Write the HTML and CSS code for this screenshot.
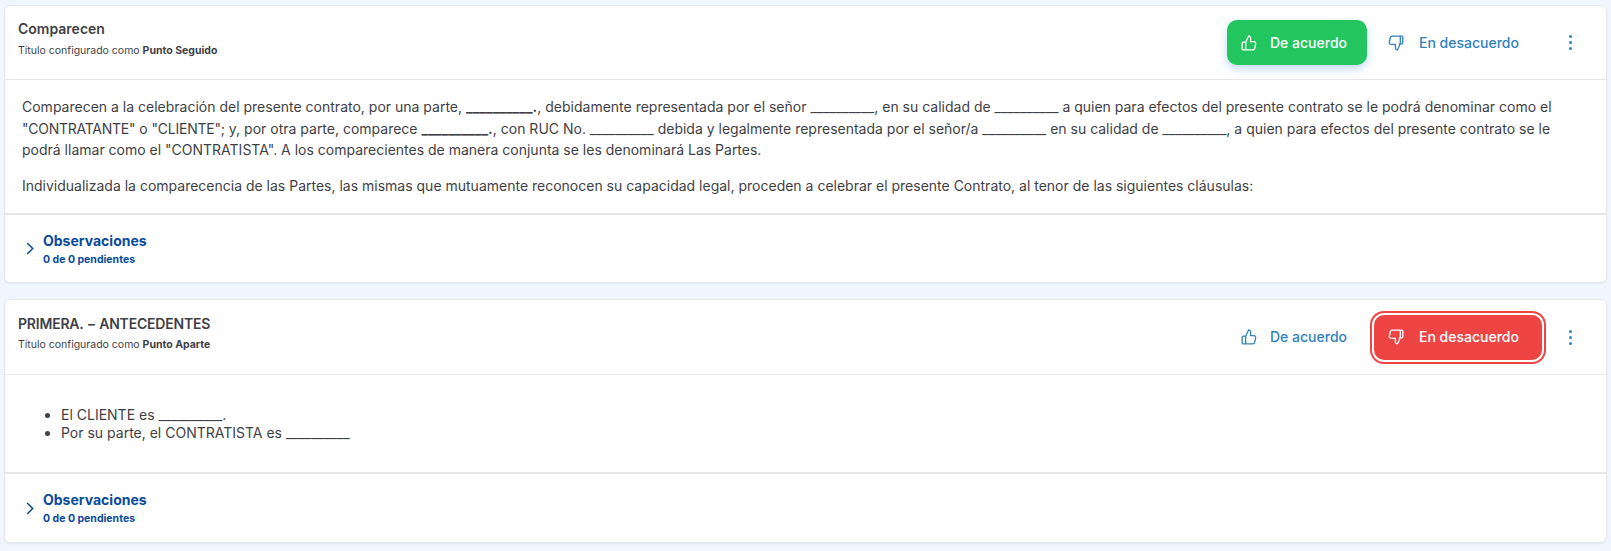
FILE: index.html
```html
<!DOCTYPE html>
<html lang="es">
<head>
<meta charset="utf-8">
<title>Contrato</title>
<link rel="stylesheet" href="styles.css">
</head>
<body>
<svg class="defs" width="0" height="0" aria-hidden="true">
  <defs>
    <symbol id="up" viewBox="0 0 16 16"><path d="M4.700 7.200H2.200a1 1 0 0 0-1 1v5.700a1 1 0 0 0 1 1h9.700a1.800 1.800 0 0 0 1.800-1.500l1-4.700a1.700 1.700 0 0 0-1.700-2H9.600V3a2 2 0 0 0-2-2L4.700 7.200v7.700" /></symbol>
    <symbol id="down" viewBox="0 0 16 16"><path d="M11.300 8.800h2.500a1 1 0 0 0 1-1V2.100a1 1 0 0 0-1-1H4.100a1.800 1.800 0 0 0-1.800 1.500l-1 4.700a1.700 1.700 0 0 0 1.700 2h4.400V13a2 2 0 0 0 2 2l2.900-6.200V1.100" /></symbol>
    <symbol id="chev" viewBox="0 0 8 13"><path d="M1.200 1l5.500 5.500L1.200 12" /></symbol>
  </defs>
</svg>
<main class="list">
  <article class="card">
    <header class="head">
      <div class="titles">
        <h2>Comparecen</h2>
        <p>Título configurado como <b>Punto Seguido</b></p>
      </div>
      <div class="actions">
        <button class="btn agree green"><svg class="ico"><use href="#up"/></svg>De acuerdo</button>
        <button class="btn disagree"><svg class="ico"><use href="#down"/></svg>En desacuerdo</button>
        <button class="more" aria-label="Más"><i></i><i></i><i></i></button>
      </div>
    </header>
    <div class="body">
      <p>Comparecen a la celebración del presente contrato, por una parte, <b>__________.</b>, debidamente representada por el señor __________, en su calidad de __________ a quien para efectos del presente contrato se le podrá denominar como el <span class="tight">"CONTRATANTE"</span> o <span class="tight">"CLIENTE"</span>; y, por otra parte, comparece <b>__________.</b>, con RUC No. __________ debida y legalmente representada por el señor/a __________ en su calidad de __________, a quien para efectos del presente contrato se le podrá llamar como el "CONTRATISTA". A los comparecientes de manera conjunta se les denominará Las Partes.</p>
      <p>Individualizada la comparecencia de las Partes, las mismas que mutuamente reconocen su capacidad legal, proceden a celebrar el presente Contrato, al tenor de las siguientes cláusulas:</p>
    </div>
    <footer class="obs">
      <svg class="chev"><use href="#chev"/></svg>
      <div><h3>Observaciones</h3><span>0 de 0 pendientes</span></div>
    </footer>
  </article>
  <article class="card">
    <header class="head second">
      <div class="titles">
        <h2 class="caps">PRIMERA. − ANTECEDENTES</h2>
        <p>Título configurado como <b>Punto Aparte</b></p>
      </div>
      <div class="actions">
        <button class="btn agree"><svg class="ico"><use href="#up"/></svg>De acuerdo</button>
        <button class="btn disagree red"><svg class="ico"><use href="#down"/></svg>En desacuerdo</button>
        <button class="more" aria-label="Más"><i></i><i></i><i></i></button>
      </div>
    </header>
    <div class="body bullets">
      <ul>
        <li>El CLIENTE es __________.</li>
        <li>Por su parte, el CONTRATISTA es __________</li>
      </ul>
    </div>
    <footer class="obs tall">
      <svg class="chev"><use href="#chev"/></svg>
      <div><h3>Observaciones</h3><span>0 de 0 pendientes</span></div>
    </footer>
  </article>
</main>
</body>
</html>
```

FILE: styles.css
```css
* { box-sizing: border-box; }
html, body { margin: 0; height: 100%; }
body {
  background: #eff6ff;
  font-family: Inter, "Liberation Sans", sans-serif;
  color: #3f3f46;
  overflow: hidden;
}
.defs { position: absolute; }
.list {
  display: flex;
  flex-direction: column;
  gap: 16px;
  padding: 5px 4px 0;
}
.card {
  background: #fff;
  border: 1px solid #e5e7eb;
  border-radius: 6px;
  box-shadow: 0 1px 2px rgba(0,0,0,.06);
}
.head {
  display: flex;
  justify-content: space-between;
  align-items: center;
  height: 74px;
  padding: 0 32px 0 13px;
  border-bottom: 1px solid #e5e7eb;
}
.head.second { height: 75px; }
.titles { margin-top: -8px; }
.titles h2 {
  margin: 0;
  font-size: 14px;
  line-height: 20px;
  font-weight: 600;
}
.titles h2.caps { letter-spacing: -0.2px; }
.titles p {
  margin: 3.500px 0 0;
  font-size: 10.500px;
  line-height: 15px;
}
.titles b { font-weight: 700; }
.actions { display: flex; align-items: center; }
.btn {
  display: flex;
  align-items: center;
  height: 45px;
  padding: 0 0 0 14px;
  border: 0;
  border-radius: 10px;
  background: transparent;
  color: #3182bd;
  font: 500 14px/20px Inter, "Liberation Sans", sans-serif;
  white-space: nowrap;
}
.agree { width: 140px; gap: 13px; }
.disagree { width: 168px; gap: 15px; margin-left: 7px; }
.btn.green {
  background: #22c55e;
  color: #fff;
  box-shadow: 0 4px 10px rgba(59,130,246,.3);
}
.btn.red {
  background: #ef4444;
  color: #fff;
  box-shadow: 0 0 0 2px #fff, 0 0 0 4px #ef4444;
}
.ico {
  width: 16px;
  height: 16px;
  fill: none;
  stroke: currentColor;
  stroke-width: 1.300;
  stroke-linejoin: round;
  stroke-linecap: round;
}
.more {
  display: flex;
  flex-direction: column;
  align-items: center;
  gap: 3px;
  width: 8px;
  margin-left: 24px;
  padding: 0;
  border: 0;
  background: transparent;
}
.more i { width: 3px; height: 3px; border-radius: 50%; background: #3182bd; }
.body {
  padding: 16px 17px 0;
  font-size: 14px;
  line-height: 21.600px;
  height: 133px;
}
.body p { margin: 0 0 14px; }
.tight { letter-spacing: -0.25px; }
.body.bullets { padding-top: 31px; height: 97px; }
.bullets ul { margin: 0; padding-left: 39px; }
.bullets li { line-height: 18px; }
.obs {
  display: flex;
  align-items: center;
  gap: 9px;
  height: 69px;
  padding: 0 0 0 21px;
  border-top: 2px solid #e5e7eb;
  color: #0a4a9c;
}
.obs.tall { height: 70px; }
.chev {
  width: 8px;
  height: 13px;
  fill: none;
  stroke: currentColor;
  stroke-width: 1.500;
}
.obs h3 { margin: 0; font-size: 14px; line-height: 20px; font-weight: 700; }
.obs span { display: block; margin-top: 1px; font-size: 10.500px; line-height: 15px; font-weight: 700; }
```
